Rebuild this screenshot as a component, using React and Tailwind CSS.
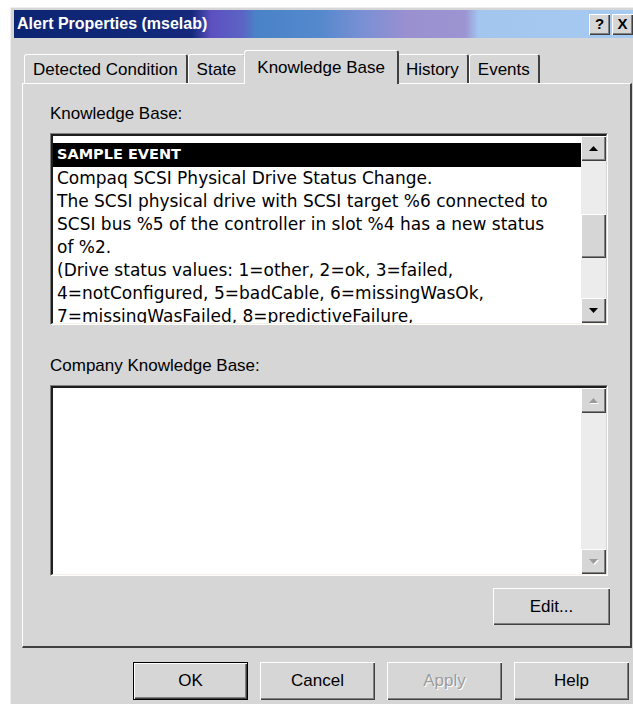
import React from 'react'

// classic 3D bevels
const raised =
  'bg-[#d6d6d6] shadow-[inset_1px_1px_0_#ffffff,inset_-1px_-1px_0_#404040,inset_-2px_-2px_0_#808080]'

const kbLines = [
  'Compaq SCSI Physical Drive Status Change.',
  'The SCSI physical drive with SCSI target %6 connected to',
  'SCSI bus %5 of the controller in slot %4 has a new status',
  'of %2.',
  '(Drive status values: 1=other, 2=ok, 3=failed,',
  '4=notConfigured, 5=badCable, 6=missingWasOk,',
  '7=missingWasFailed, 8=predictiveFailure,',
]

function Arrow({ down, disabled }) {
  return (
    <svg width="9" height="5" viewBox="0 0 9 5" className={disabled ? 'drop-shadow-[1px_1px_0_#ffffff]' : ''}>
      <polygon
        points={down ? '0,0 9,0 4.5,5' : '4.5,0 9,5 0,5'}
        fill={disabled ? '#9a9a9a' : '#000000'}
      />
    </svg>
  )
}

function ScrollBar({ thumb, disabled }) {
  return (
    <div className="w-[25px] flex flex-col bg-[#ececec]">
      <div className={`h-[25px] flex items-center justify-center ${raised}`}>
        <Arrow disabled={disabled} />
      </div>
      <div className="flex-1">
        {thumb && <div className={`mt-[53px] h-[44px] ${raised}`} />}
      </div>
      <div className={`h-[25px] flex items-center justify-center ${raised}`}>
        <Arrow down disabled={disabled} />
      </div>
    </div>
  )
}

function SunkenBox({ height, children, thumb, disabled }) {
  return (
    <div
      className={`w-[558px] ${height} border border-[#808080] border-r-white border-b-white`}
    >
      <div className="h-full flex border-t-2 border-l-2 border-[#1e1e1e] border-r border-b border-r-[#d6d6d6] border-b-[#f4f1e4]">
        <div className="flex-1 bg-white overflow-hidden">{children}</div>
        <ScrollBar thumb={thumb} disabled={disabled} />
      </div>
    </div>
  )
}

function Tab({ label, active }) {
  if (active) {
    return (
      <div className="relative z-10 -mb-px -mx-[2px] h-[34px] px-[12px] flex items-center bg-[#d6d6d6] border-t border-l border-white border-r-2 border-r-[#404040] rounded-t-[3px]">
        {label}
      </div>
    )
  }
  return (
    <div className="h-[29px] px-[8px] flex items-center border-t border-l border-white border-r-2 border-r-[#404040] rounded-t-[3px]">
      {label}
    </div>
  )
}

function Button({ label, isDefault, disabled, className = '' }) {
  return (
    <div
      className={`w-[115px] h-[38px] flex items-center justify-center text-[17px] ${raised} ${
        isDefault ? 'border border-black' : ''
      } ${disabled ? 'text-[#9c9c9c] [text-shadow:1px_1px_0_#ffffff]' : ''} ${className}`}
    >
      {label}
    </div>
  )
}

export default function App() {
  return (
    <div className="w-[633px] h-[704px] overflow-hidden bg-white pt-[7px] pl-[10px] font-['Liberation_Sans',Arial,sans-serif] text-black">
      <div className="w-[640px] h-[720px] bg-[#d6d6d6] border-l border-t border-[#eeeeee] pl-[3px] pt-[2px]">
        {/* Title bar */}
        <div className="h-[28px] flex items-center pl-[3px] bg-[linear-gradient(90deg,#0c2572_0%,#14297c_28%,#5d50c0_31%,#5c64c4_36%,#4a82c8_38%,#5489cc_48%,#7b90d4_55%,#9a90d0_62%,#9c95d2_71%,#a2c6ee_73%,#a6caf0_100%)]">
          <span className="text-white font-bold text-[16px] leading-none">Alert Properties (mselab)</span>
          <div className="ml-auto mr-[17px] flex gap-[2px]">
            <div className={`w-[21px] h-[21px] flex items-center justify-center font-bold text-[15px] ${raised}`}>?</div>
            <div className={`w-[21px] h-[21px] flex items-center justify-center font-bold text-[15px] ${raised}`}>X</div>
          </div>
        </div>

        {/* Tabs */}
        <div className="mt-[12px] h-[33px] pl-[10px] flex items-end text-[17px] leading-none">
          <Tab label="Detected Condition" />
          <Tab label="State" />
          <Tab label="Knowledge Base" active />
          <Tab label="History" />
          <Tab label="Events" />
        </div>

        {/* Tab page */}
        <div className="ml-[8px] w-[610px] h-[565px] flex flex-col pl-[27px] pt-[20px] border-l border-t border-white border-r-2 border-b-2 border-r-[#404040] border-b-[#404040] text-[17px]">
          <div className="leading-[20px]">Knowledge Base:</div>
          <div className="mt-[9px]">
            <SunkenBox height="h-[192px]" thumb>
              <div className="h-[7px]" />
              <div className="h-[24px] pl-[4px] flex items-center bg-black text-white font-bold text-[14.5px] font-['DejaVu_Sans',sans-serif]">
                SAMPLE EVENT
              </div>
              <div className="pl-[4px] font-['DejaVu_Sans',sans-serif] text-[17px] leading-[23px] whitespace-nowrap">
                {kbLines.map((l) => (
                  <div key={l}>{l}</div>
                ))}
              </div>
            </SunkenBox>
          </div>

          <div className="mt-[31px] leading-[20px]">Company Knowledge Base:</div>
          <div className="mt-[9px]">
            <SunkenBox height="h-[191px]" disabled />
          </div>

          <div className="mt-[12px] ml-[443px]">
            <div className={`w-[117px] h-[37px] flex items-center justify-center ${raised}`}>Edit...</div>
          </div>
        </div>

        {/* Dialog buttons */}
        <div className="mt-[14px] pl-[119px] flex gap-[12px]">
          <Button label="OK" isDefault />
          <Button label="Cancel" />
          <Button label="Apply" disabled />
          <Button label="Help" />
        </div>
      </div>
    </div>
  )
}
